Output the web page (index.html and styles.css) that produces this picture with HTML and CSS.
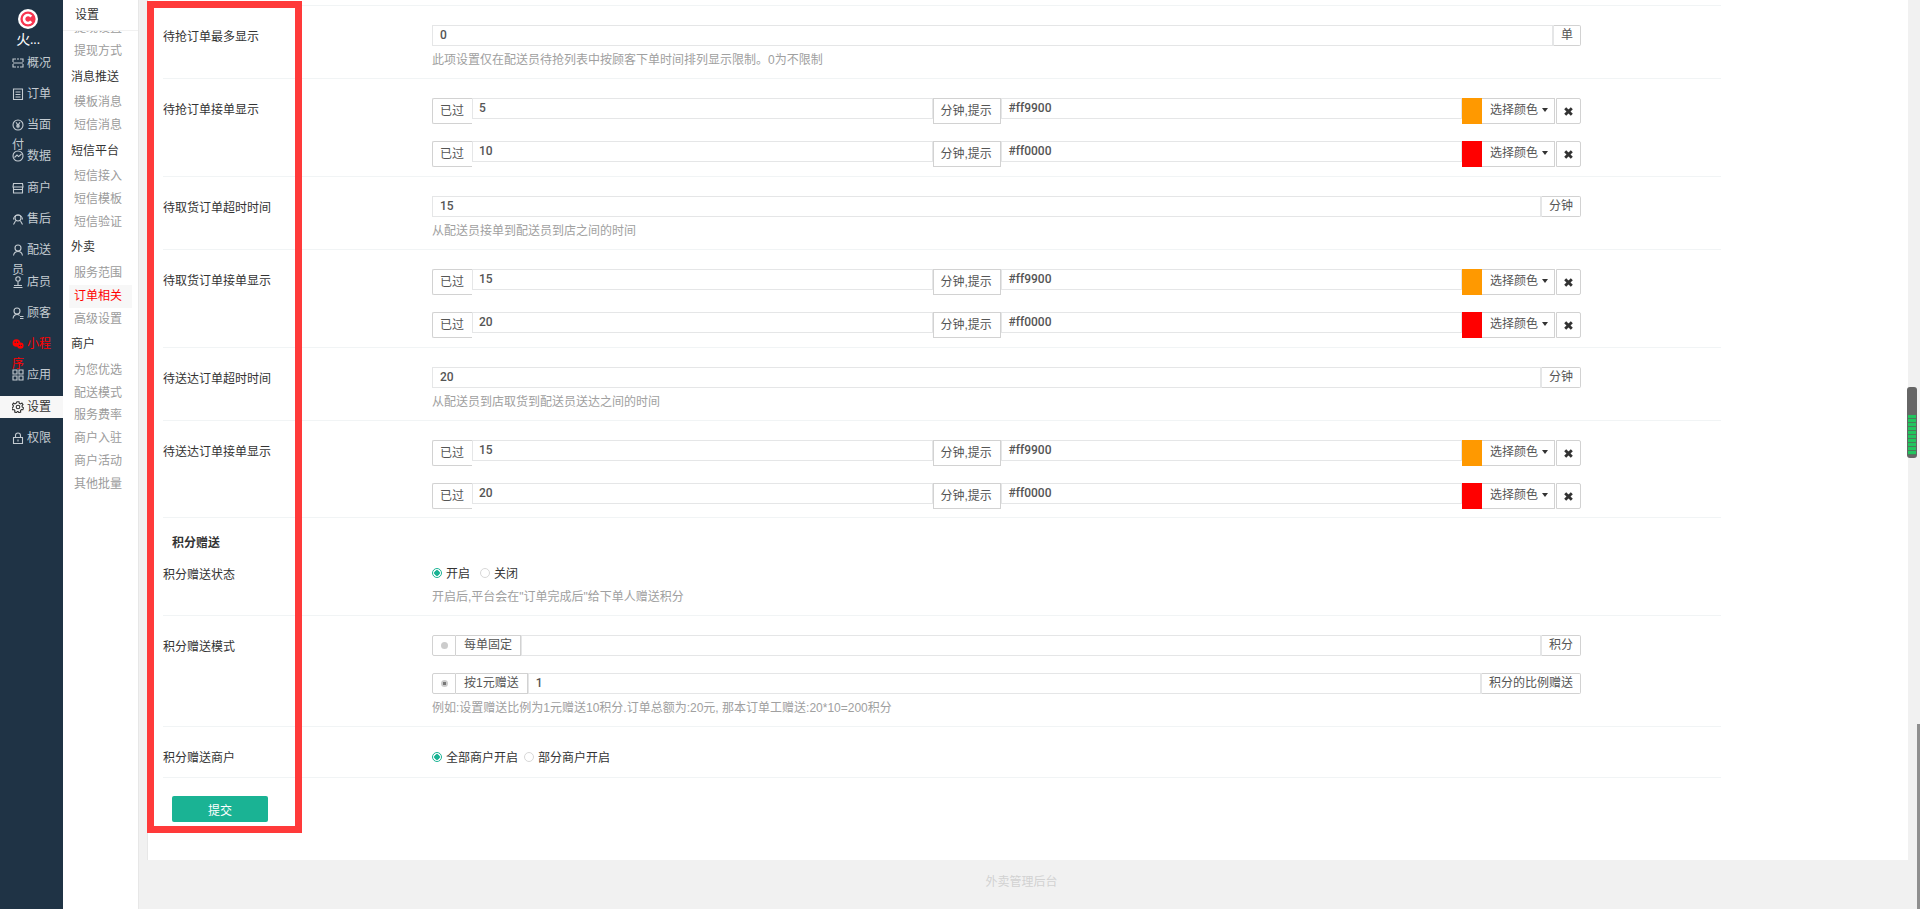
FILE: index.html
```html
<!DOCTYPE html>
<html lang="zh-CN">

<head>
  <meta charset="UTF-8">
  <title>外卖管理后台</title>
  <link rel="stylesheet" href="styles.css">
</head>

<body>
  <aside class="nav">
    <div class="brand">
      <svg class="logo" viewBox="0 0 20 20">
        <circle cx="10" cy="10" r="10" fill="#fff"/>
        <circle cx="10" cy="10" r="7.6" fill="#f8354f"/>
        <path d="M13.2 7.6A4 4 0 1 0 13.2 12.4" fill="none" stroke="#fff" stroke-width="2.6"/>
        <circle cx="10" cy="10" r="1.4" fill="#f8354f"/>
      </svg>
      <div class="brand-name">火...</div>
    </div>
    <a class="nav-item"><svg class="ico" viewBox="0 0 12 12"><path d="M1 5V2h3M8 2h3v3M1 7v3h3M8 10h3V7M5 2h2M5 10h2M1 6h10"/></svg>概况</a>
    <a class="nav-item"><svg class="ico" viewBox="0 0 12 12"><path d="M1.5 1h9v10.5h-9zM3.5 4h5M3.5 6.5h5M3.5 9h5"/></svg>订单</a>
    <a class="nav-item"><svg class="ico" viewBox="0 0 12 12"><circle cx="6" cy="6" r="5"/><path d="M4 3.2 6 6l2-2.8M6 6v3.2M4.2 6.2h3.6M4.2 7.8h3.6"/></svg>当面付</a>
    <a class="nav-item"><svg class="ico" viewBox="0 0 12 12"><circle cx="6" cy="6" r="5"/><path d="M2.5 7.5 5 5l1.6 1.6L9.5 4"/></svg>数据</a>
    <a class="nav-item"><svg class="ico" viewBox="0 0 12 12"><path d="M1.5 1.5h9l.5 3.5h-10zM1.5 5v6h9V5M1.5 7.5h9"/></svg>商户</a>
    <a class="nav-item"><svg class="ico" viewBox="0 0 12 12"><circle cx="6" cy="5" r="3"/><path d="M1.5 6.5A4.5 4.5 0 0 1 10.5 6.5M1.5 11.5 3.5 8M10.5 11.5 8.5 8"/></svg>售后</a>
    <a class="nav-item"><svg class="ico" viewBox="0 0 12 12"><circle cx="6" cy="4" r="3"/><path d="M1.5 11.5C2 8.5 4 7.5 6 7.5s4 1 4.500 4"/></svg>配送员</a>
    <a class="nav-item"><svg class="ico" viewBox="0 0 12 12"><circle cx="6" cy="3" r="2.200"/><path d="M6 5.500V9M2 9.500h8M1.500 11.500h9"/></svg>店员</a>
    <a class="nav-item"><svg class="ico" viewBox="0 0 12 12"><circle cx="5" cy="4" r="3"/><path d="M1 11.500C1.500 8.500 3 7.500 5 7.500c1 0 2 .3 2.600 1M8 9.500h3.500M8 11.500h3.500"/></svg>顾客</a>
    <a class="nav-item nav-item-hot"><svg class="ico ico-solid" viewBox="0 0 12 12"><circle cx="4.400" cy="5" r="3.800"/><circle cx="8.400" cy="7.600" r="3.200"/><circle class="ico-hole" cx="3.200" cy="4.200" r=".7"/><circle class="ico-hole" cx="5.600" cy="4.200" r=".7"/><circle class="ico-hole" cx="7.400" cy="7.400" r=".6"/><circle class="ico-hole" cx="9.400" cy="7.400" r=".6"/></svg>小程序</a>
    <a class="nav-item"><svg class="ico" viewBox="0 0 12 12"><path d="M1 1h4v4H1zM7 1h4v4H7zM1 7h4v4H1zM7 7h4v4H7z"/></svg>应用</a>
    <a class="nav-item nav-item-active"><svg class="ico" viewBox="0 0 12 12"><circle cx="6" cy="6" r="1.800"/><path d="M5 .8h2l.3 1.500 1.300.6 1.300-.8 1.100 1.500-1 1.100.2 1.300 1.300.8-.6 1.900-1.500-.1-.9 1 .2 1.500-1.800.6-.9-1.200H5.400l-.9 1.200-1.800-.6.2-1.500-.9-1-1.500.1-.6-1.900 1.300-.8.2-1.300-1-1.100L1.500 2.100l1.300.8 1.300-.6z"/></svg>设置</a>
    <a class="nav-item"><svg class="ico" viewBox="0 0 12 12"><path d="M1.500 5.500h9v6h-9zM3.500 5.500V3.500a2.500 2.500 0 0 1 5 0v2M6 7.500v2"/></svg>权限</a>
  </aside>

  <aside class="subnav">
    <div class="subnav-head">设置</div>
    <div class="subnav-scroll">
      <div class="subnav-inner">
        <a class="sub-item">提现设置</a>
        <a class="sub-item">提现方式</a>
        <div class="sub-title">消息推送</div>
        <a class="sub-item">模板消息</a>
        <a class="sub-item">短信消息</a>
        <div class="sub-title">短信平台</div>
        <a class="sub-item">短信接入</a>
        <a class="sub-item">短信模板</a>
        <a class="sub-item">短信验证</a>
        <div class="sub-title">外卖</div>
        <a class="sub-item">服务范围</a>
        <a class="sub-item sub-item-active">订单相关</a>
        <a class="sub-item">高级设置</a>
        <div class="sub-title">商户</div>
        <a class="sub-item">为您优选</a>
        <a class="sub-item">配送模式</a>
        <a class="sub-item">服务费率</a>
        <a class="sub-item">商户入驻</a>
        <a class="sub-item">商户活动</a>
        <a class="sub-item">其他批量</a>
      </div>
    </div>
  </aside>

  <main class="main">
    <div class="panel">
      <form class="form">
        <div class="row">
          <div class="label">待抢订单最多显示</div>
          <div class="control">
            <div class="group">
              <div class="field">0</div>
              <div class="addon addon-end">单</div>
            </div>
            <div class="help">此项设置仅在配送员待抢列表中按顾客下单时间排列显示限制。0为不限制</div>
          </div>
        </div>

        <div class="row">
          <div class="label">待抢订单接单显示</div>
          <div class="control">
            <div class="group">
              <div class="addon addon-start addon-tall">已过</div>
              <div class="field">5</div>
              <div class="addon addon-mid addon-tall">分钟,提示</div>
              <div class="field">#ff9900</div>
              <div class="swatch swatch-orange"></div>
              <div class="pick">选择颜色<span class="caret"></span></div>
              <div class="remove"><svg viewBox="0 0 10 10"><path d="M2 2l6 6M8 2l-6 6"/></svg></div>
            </div>
            <div class="group group-next">
              <div class="addon addon-start addon-tall">已过</div>
              <div class="field">10</div>
              <div class="addon addon-mid addon-tall">分钟,提示</div>
              <div class="field">#ff0000</div>
              <div class="swatch swatch-red"></div>
              <div class="pick">选择颜色<span class="caret"></span></div>
              <div class="remove"><svg viewBox="0 0 10 10"><path d="M2 2l6 6M8 2l-6 6"/></svg></div>
            </div>
          </div>
        </div>

        <div class="row">
          <div class="label">待取货订单超时时间</div>
          <div class="control">
            <div class="group">
              <div class="field">15</div>
              <div class="addon addon-end">分钟</div>
            </div>
            <div class="help">从配送员接单到配送员到店之间的时间</div>
          </div>
        </div>

        <div class="row">
          <div class="label">待取货订单接单显示</div>
          <div class="control">
            <div class="group">
              <div class="addon addon-start addon-tall">已过</div>
              <div class="field">15</div>
              <div class="addon addon-mid addon-tall">分钟,提示</div>
              <div class="field">#ff9900</div>
              <div class="swatch swatch-orange"></div>
              <div class="pick">选择颜色<span class="caret"></span></div>
              <div class="remove"><svg viewBox="0 0 10 10"><path d="M2 2l6 6M8 2l-6 6"/></svg></div>
            </div>
            <div class="group group-next">
              <div class="addon addon-start addon-tall">已过</div>
              <div class="field">20</div>
              <div class="addon addon-mid addon-tall">分钟,提示</div>
              <div class="field">#ff0000</div>
              <div class="swatch swatch-red"></div>
              <div class="pick">选择颜色<span class="caret"></span></div>
              <div class="remove"><svg viewBox="0 0 10 10"><path d="M2 2l6 6M8 2l-6 6"/></svg></div>
            </div>
          </div>
        </div>

        <div class="row">
          <div class="label">待送达订单超时时间</div>
          <div class="control">
            <div class="group">
              <div class="field">20</div>
              <div class="addon addon-end">分钟</div>
            </div>
            <div class="help">从配送员到店取货到配送员送达之间的时间</div>
          </div>
        </div>

        <div class="row row-short">
          <div class="label">待送达订单接单显示</div>
          <div class="control">
            <div class="group">
              <div class="addon addon-start addon-tall">已过</div>
              <div class="field">15</div>
              <div class="addon addon-mid addon-tall">分钟,提示</div>
              <div class="field">#ff9900</div>
              <div class="swatch swatch-orange"></div>
              <div class="pick">选择颜色<span class="caret"></span></div>
              <div class="remove"><svg viewBox="0 0 10 10"><path d="M2 2l6 6M8 2l-6 6"/></svg></div>
            </div>
            <div class="group group-next">
              <div class="addon addon-start addon-tall">已过</div>
              <div class="field">20</div>
              <div class="addon addon-mid addon-tall">分钟,提示</div>
              <div class="field">#ff0000</div>
              <div class="swatch swatch-red"></div>
              <div class="pick">选择颜色<span class="caret"></span></div>
              <div class="remove"><svg viewBox="0 0 10 10"><path d="M2 2l6 6M8 2l-6 6"/></svg></div>
            </div>
          </div>
        </div>

        <div class="section">积分赠送</div>

        <div class="row row-tight">
          <div class="label">积分赠送状态</div>
          <div class="control">
            <div class="options">
              <span class="radio radio-on"></span><span class="option">开启</span>
              <span class="radio"></span><span class="option">关闭</span>
            </div>
            <div class="help">开启后,平台会在"订单完成后"给下单人赠送积分</div>
          </div>
        </div>

        <div class="row">
          <div class="label">积分赠送模式</div>
          <div class="control">
            <div class="group">
              <div class="addon addon-radio"><span class="dot"></span></div>
              <div class="addon addon-text">每单固定</div>
              <div class="field"></div>
              <div class="addon addon-end">积分</div>
            </div>
            <div class="group group-next">
              <div class="addon addon-radio"><span class="dot dot-on"></span></div>
              <div class="addon addon-text">按1元赠送</div>
              <div class="field">1</div>
              <div class="addon addon-end">积分的比例赠送</div>
            </div>
            <div class="help">例如:设置赠送比例为1元赠送10积分.订单总额为:20元, 那本订单工赠送:20*10=200积分</div>
          </div>
        </div>

        <div class="row row-last">
          <div class="label">积分赠送商户</div>
          <div class="control">
            <div class="options options-close">
              <span class="radio radio-on"></span><span class="option">全部商户开启</span>
              <span class="radio"></span><span class="option">部分商户开启</span>
            </div>
          </div>
        </div>

        <button class="submit" type="button">提交</button>
      </form>
    </div>
    <footer class="footer">外卖管理后台</footer>
  </main>

  <!-- annotation frame and scrollbar bits lying over the page -->
  <div class="frame"></div>
  <div class="thumb"></div>
  <div class="meter"><div class="meter-bars"></div></div>
</body>

</html>
```

FILE: styles.css
```css
html,
body {
  height: 100%;
  margin: 0;
  overflow: hidden;
}

body {
  display: flex;
  font-family: "Liberation Sans", "Noto Sans CJK SC", sans-serif;
  font-size: 12px;
  color: #333;
  background: #f1f1f1;
}

/* left dark nav */
.nav {
  width: 63px;
  flex-shrink: 0;
  background: #1f3345;
  color: #c4ccd2;
}

.brand {
  height: 52.5px;
  padding-top: 9px;
  box-sizing: border-box;
  text-align: center;
}

.logo {
  display: block;
  width: 20px;
  height: 20px;
  margin: 0 auto;
  position: relative;
  left: -4px;
}

.brand-name {
  color: #fff;
  font-size: 14px;
  line-height: 20px;
  margin-right: 7px;
  letter-spacing: -0.5px;
}

.nav-item {
  display: block;
  height: 31.3px;
  padding: 0 4px 0 12px;
  line-height: 20px;
}

.ico {
  display: inline-block;
  width: 12px;
  height: 12px;
  margin-right: 3px;
  vertical-align: -2px;
  fill: none;
  stroke: currentColor;
  stroke-width: 1.100;
}

.ico-solid {
  fill: currentColor;
  stroke: none;
}

.ico-hole {
  fill: #1f3345;
}

.nav-item-hot {
  color: #f00;
}

.nav-item-active {
  background: #f7f7f7;
  color: #333;
  height: 22px;
  margin-top: -1px;
  margin-bottom: 10.300px;
  line-height: 22px;
}

/* second column */
.subnav {
  width: 75px;
  flex-shrink: 0;
  display: flex;
  flex-direction: column;
  background: #fff;
  border-right: 1px solid #e7e7e7;
}

.subnav-head {
  height: 30px;
  line-height: 30px;
  padding-left: 12px;
  border-bottom: 1px solid #f1f1f1;
  flex-shrink: 0;
}

.subnav-scroll {
  flex: 1;
  overflow: hidden;
}

.subnav-inner {
  margin-top: -14px;
}

.sub-item {
  display: block;
  height: 22.750px;
  line-height: 22.750px;
  margin: 0 6px;
  padding-left: 5px;
  color: #9b9b9b;
}

.sub-item-active {
  color: #f00;
  background: #f7f7f7;
}

.sub-title {
  height: 28.600px;
  line-height: 28.600px;
  padding-left: 8px;
  color: #333;
}

/* content */
.main {
  flex: 1;
  min-width: 0;
  padding: 0 12px 0 8px;
}

.panel {
  height: 860px;
  box-sizing: border-box;
  background: #fff;
  border-left: 1px solid #e7e7e7;
  padding: 5px 187px 0 15px;
}

.form {
  border-top: 1px solid #f1f4f5;
}

.row {
  display: flex;
  padding: 19px 0 9px;
  border-bottom: 1px solid #f1f4f5;
}

.row-tight {
  padding-top: 10px;
}

.row-short {
  padding-bottom: 8px;
}

.row-last {
  padding-bottom: 10px;
}

.label {
  width: 269px;
  flex-shrink: 0;
  padding-top: 3px;
  line-height: 18px;
}

.row-tight .label {
  padding-top: 4px;
}

.control {
  width: 1149px;
}

.group {
  display: flex;
  align-items: flex-start;
}

.group-next {
  margin-top: 17px;
}

.field {
  flex: 1;
  min-width: 0;
  height: 21px;
  box-sizing: border-box;
  border: 1px solid #e5e6e7;
  padding: 0 7px;
  font-family: Roboto, "Liberation Sans", sans-serif;
  line-height: 18px;
  font-weight: 500;
  color: #555;
}

.addon-start + .field {
  padding-left: 6px;
}

.addon {
  height: 21px;
  box-sizing: border-box;
  flex-shrink: 0;
  background: #fff;
  border: 1px solid #d2d2d2;
  padding: 0 7px;
  line-height: 19px;
  color: #555;
}

.addon-tall {
  height: 26px;
  line-height: 25px;
}

.addon-start {
  width: 40px;
  border-right: 0;
  border-radius: 2px 0 0 2px;
}

.addon-mid {
  width: 68px;
  padding: 0 7px;
  white-space: nowrap;
}

.addon-end {
  border-radius: 0 2px 2px 0;
  border-left-color: #e5e6e7;
}

.addon-radio {
  width: 24px;
  padding: 0;
  display: flex;
  align-items: center;
  justify-content: center;
  border-radius: 2px 0 0 2px;
}

.addon-text {
  border-left: 0;
  padding: 0 8px;
}

.dot {
  width: 7px;
  height: 7px;
  border-radius: 50%;
  background: #ccc;
}

.dot-on {
  background: radial-gradient(circle, #777 0 1.500px, #ccc 2px);
}

.swatch {
  width: 20px;
  height: 26px;
  flex-shrink: 0;
}

.swatch-orange {
  background: #f90;
}

.swatch-red {
  background: #f00;
}

.pick {
  width: 73px;
  height: 26px;
  box-sizing: border-box;
  flex-shrink: 0;
  border: 1px solid #d2d2d2;
  border-left: 0;
  padding-left: 8px;
  line-height: 22px;
  color: #555;
  white-space: nowrap;
}

.caret {
  display: inline-block;
  margin-left: 4px;
  vertical-align: 2px;
  border-top: 4px solid #333;
  border-left: 3.500px solid transparent;
  border-right: 3.500px solid transparent;
}

.remove {
  width: 25px;
  height: 26px;
  box-sizing: border-box;
  flex-shrink: 0;
  margin-left: 1px;
  border: 1px solid #d2d2d2;
  border-radius: 0 2px 2px 0;
  display: flex;
  align-items: center;
  justify-content: center;
}

.remove svg {
  width: 11px;
  height: 11px;
  fill: none;
  stroke: #333;
  stroke-width: 2.600;
}

.help {
  margin-top: 5px;
  line-height: 18px;
  color: #a0a0a0;
}

.section {
  height: 34px;
  box-sizing: border-box;
  padding: 16px 0 0 9px;
  line-height: 18px;
  font-weight: 700;
}

.options {
  display: flex;
  align-items: center;
  height: 21px;
}

.radio {
  width: 8px;
  height: 8px;
  border: 1px solid #d8d8d8;
  border-radius: 50%;
  flex-shrink: 0;
  margin-right: 4px;
}

.radio-on {
  border-color: #1ab394;
  background: radial-gradient(circle, #1ab394 0 2.500px, #fff 3px);
}

.option {
  margin-right: 10px;
}

.options-close .option {
  margin-right: 6px;
}

.submit {
  display: block;
  width: 96px;
  height: 26px;
  margin: 18px 0 0 9px;
  padding: 0;
  border: 0;
  border-radius: 2px;
  background: #1ab394;
  color: #fff;
  font: inherit;
}

.footer {
  padding-right: 12px;
  height: 44px;
  line-height: 44px;
  text-align: center;
  color: #d2d2d2;
}

/* things over the page */
.frame {
  position: absolute;
  left: 147px;
  top: 1px;
  width: 141px;
  height: 818px;
  border: 7px solid #ff3a3a;
  pointer-events: none;
}

.thumb {
  position: absolute;
  left: 1917px;
  top: 724px;
  width: 3px;
  height: 185px;
  background: #8f8f8f;
}

.meter {
  position: absolute;
  left: 1907px;
  top: 387px;
  width: 10px;
  height: 71px;
  box-sizing: border-box;
  padding: 28px 1px 3px;
  background: #666;
  border-radius: 3px;
}

.meter-bars {
  height: 100%;
  background: repeating-linear-gradient(#22c55e 0 3px, #4c7a5c 3px 4px);
}
```
